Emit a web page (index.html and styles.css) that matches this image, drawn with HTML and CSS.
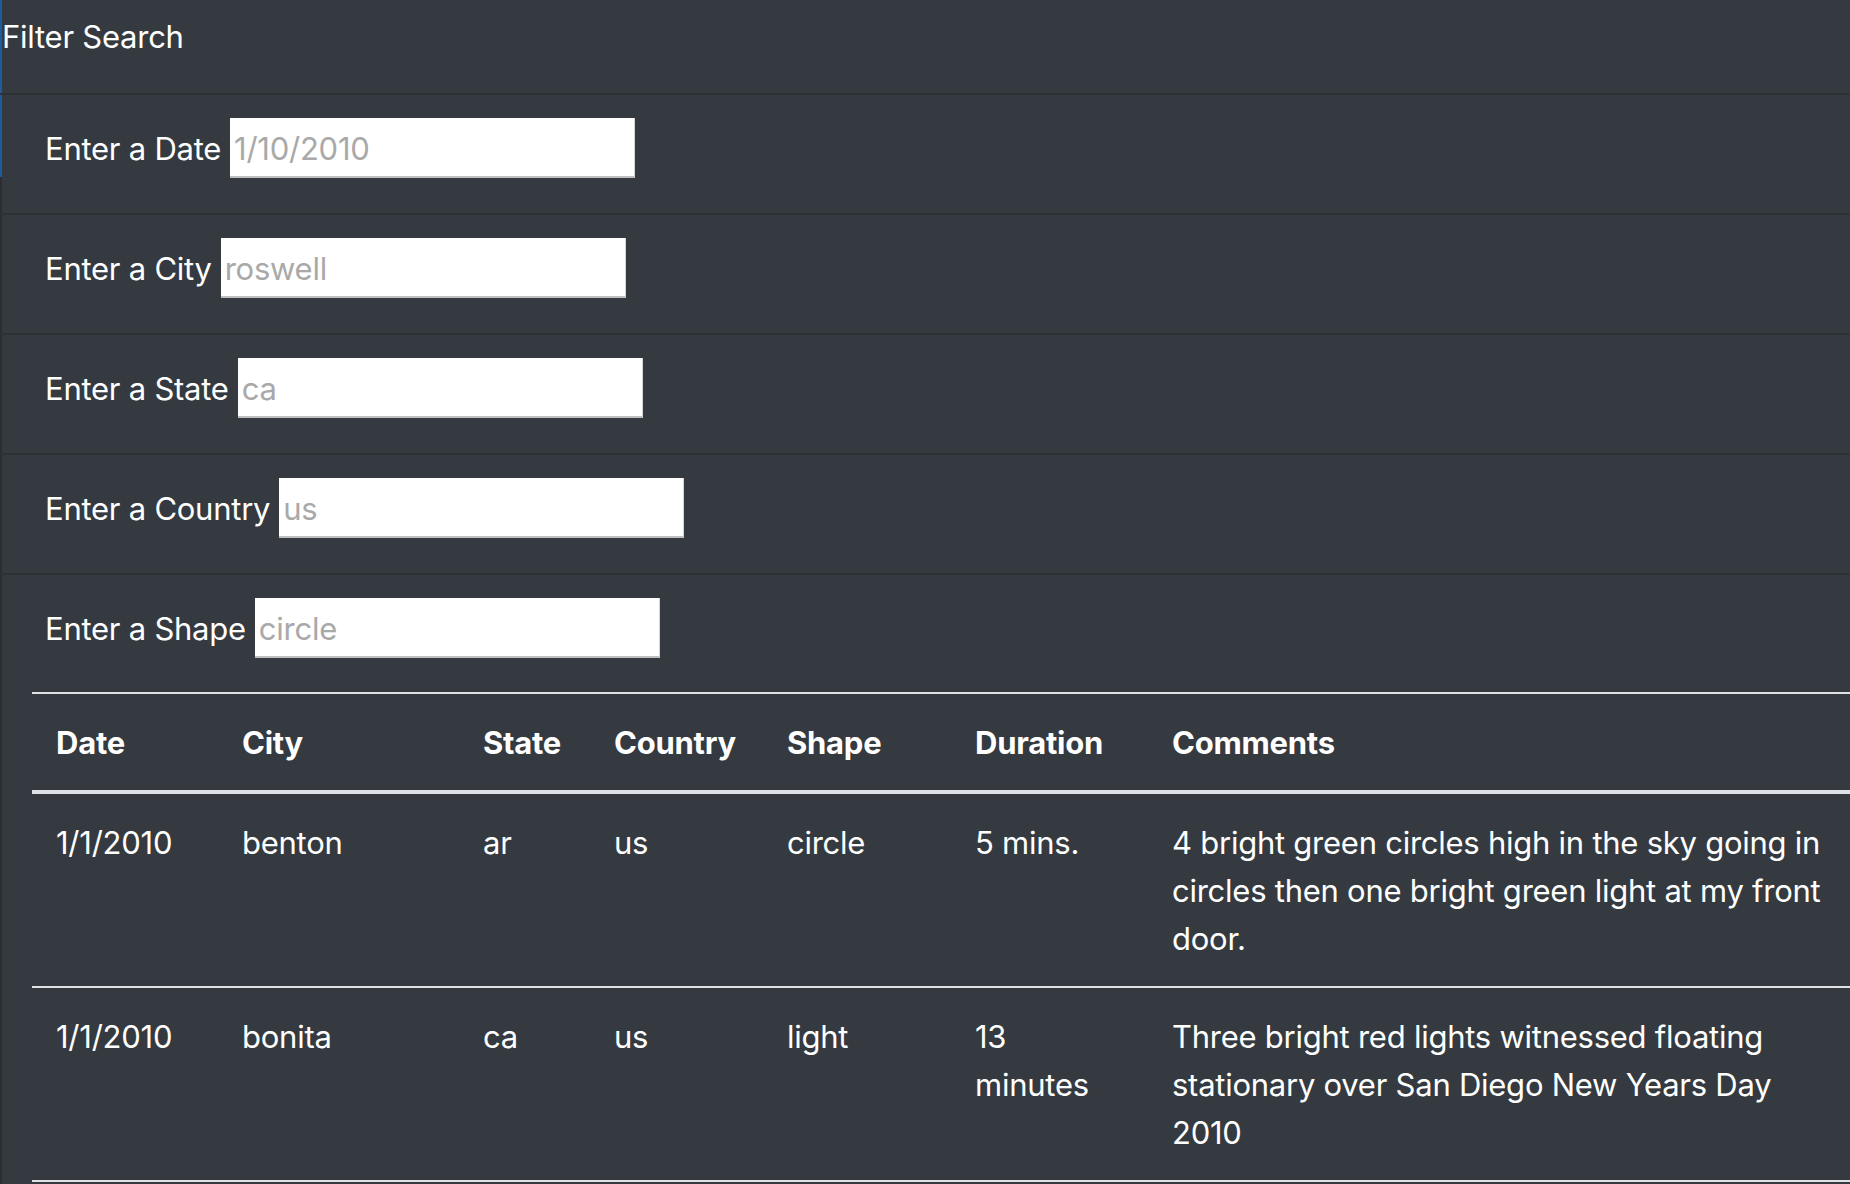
FILE: index.html
```html
<!DOCTYPE html>
<html lang="en">
<head>
<meta charset="utf-8">
<title>Filter Search</title>
<link rel="stylesheet" href="styles.css">
</head>
<body>
<div class="page">
  <div class="card-header">Filter Search</div>
  <ul class="filters">
    <li class="filter-item"><label class="field"><span class="field-label">Enter a Date</span><input class="field-input" type="text" placeholder="1/10/2010"></label></li>
    <li class="filter-item"><label class="field"><span class="field-label">Enter a City</span><input class="field-input" type="text" placeholder="roswell"></label></li>
    <li class="filter-item"><label class="field"><span class="field-label">Enter a State</span><input class="field-input" type="text" placeholder="ca"></label></li>
    <li class="filter-item"><label class="field"><span class="field-label">Enter a Country</span><input class="field-input" type="text" placeholder="us"></label></li>
    <li class="filter-item last"><label class="field"><span class="field-label">Enter a Shape</span><input class="field-input" type="text" placeholder="circle"></label></li>
  </ul>
  <table class="ufo-table">
    <thead>
      <tr>
        <th class="c-date">Date</th>
        <th class="c-city">City</th>
        <th class="c-state">State</th>
        <th class="c-country">Country</th>
        <th class="c-shape">Shape</th>
        <th class="c-duration">Duration</th>
        <th class="c-comments">Comments</th>
      </tr>
    </thead>
    <tbody>
      <tr>
        <td>1/1/2010</td>
        <td>benton</td>
        <td>ar</td>
        <td>us</td>
        <td>circle</td>
        <td>5 mins.</td>
        <td>4 bright green circles high in the sky going in circles then one bright green light at my front door.</td>
      </tr>
      <tr>
        <td>1/1/2010</td>
        <td>bonita</td>
        <td>ca</td>
        <td>us</td>
        <td>light</td>
        <td>13 minutes</td>
        <td>Three bright red lights witnessed floating stationary over San Diego New Years Day 2010</td>
      </tr>
    </tbody>
  </table>
</div>
</body>
</html>
```
FILE: styles.css
```css
* { box-sizing: border-box; }

html, body {
  margin: 0;
  padding: 0;
  overflow: hidden;
}

body {
  background: #343a40;
  color: #ffffff;
  font-family: Inter, "Helvetica Neue", Arial, sans-serif;
  font-size: 31px;
  letter-spacing: -0.25px;
  line-height: 48px;
}

.page {
  min-height: 1184px;
  background:
    linear-gradient(to bottom, #1f5d99 0, #1f5d99 177px, #2a2e33 177px, #2a2e33 100%) left top / 2px 100% no-repeat,
    #343a40;
}

.card-header {
  padding: 13px 0 32px 2px;
  border-bottom: 2px solid #2d3237;
}

.filters {
  list-style: none;
  margin: 0;
  padding: 0;
}

.filter-item {
  padding: 23px 0 35px 45px;
  border-bottom: 2px solid #2d3237;
}

.filter-item.last {
  padding-bottom: 34px;
  border-bottom: none;
}

.field {
  display: flex;
  align-items: center;
  gap: 9px;
}

.field-label {
  padding-top: 1px;
}

.field-input {
  width: 405px;
  height: 60px;
  margin: 0;
  padding: 2px 4px 0;
  border: none;
  border-bottom: 2px solid #bfbfbf;
  border-right: 1px solid #d4d4d4;
  background: #ffffff;
  font-family: inherit;
  font-size: 31px;
  letter-spacing: -0.25px;
  color: #333;
  outline: none;
}

.field-input::placeholder {
  color: #a9a9a9;
}

.ufo-table {
  margin-left: 32px;
  width: 1834px;
  table-layout: fixed;
  border-collapse: separate;
  border-spacing: 0;
  color: #ffffff;
}

.ufo-table th,
.ufo-table td {
  padding: 25px 24px 23px;
  text-align: left;
  vertical-align: top;
}

.ufo-table th {
  font-weight: 700;
  border-top: 2px solid #dee2e6;
  border-bottom: 4px solid #dee2e6;
}

.ufo-table td {
  border-bottom: 2px solid #dee2e6;
}

.c-date { width: 186px; }
.c-city { width: 241px; }
.c-state { width: 131px; }
.c-country { width: 173px; }
.c-shape { width: 188px; }
.c-duration { width: 197px; }
.c-comments { width: 718px; }
```
